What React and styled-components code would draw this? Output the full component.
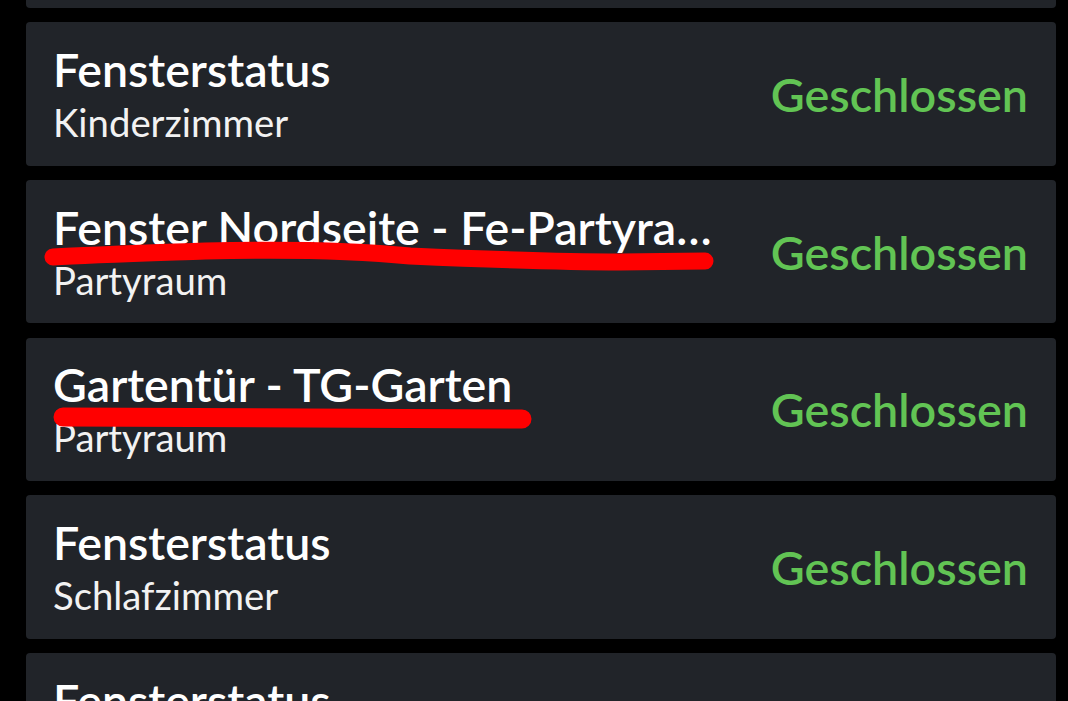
import React from 'react';
import styled, { createGlobalStyle } from 'styled-components';

const GlobalStyle = createGlobalStyle`
  html, body {
    margin: 0;
    padding: 0;
    background: #000;
    overflow: hidden;
  }
  body {
    font-family: Lato, "Liberation Sans", sans-serif;
  }
`;

const sensors = [
  { name: 'Fensterstatus', room: 'Badezimmer' },
  { name: 'Fensterstatus', room: 'Kinderzimmer' },
  { name: 'Fenster Nordseite - Fe-Partyraum', room: 'Partyraum' },
  { name: 'Gartentür - TG-Garten', room: 'Partyraum' },
  { name: 'Fensterstatus', room: 'Schlafzimmer' },
  { name: 'Fensterstatus', room: 'Wohnzimmer' },
];

const Page = styled.div`
  position: relative;
  height: 701px;
  padding: 0 12px 0 26px;
  overflow: hidden;
`;

const List = styled.div`
  display: flex;
  flex-direction: column;
  gap: 14.25px;
  margin-top: -135.75px;
`;

const Card = styled.div`
  height: 143.5px;
  flex-shrink: 0;
  box-sizing: border-box;
  background: #212429;
  border-radius: 4px;
  padding: 0 28px 0 27px;
  display: flex;
  align-items: center;
  gap: 44px;
`;

const Info = styled.div`
  flex: 1;
  min-width: 0;
  margin-bottom: 3px;
`;

const Title = styled.div`
  color: #fff;
  font-size: 46.5px;
  font-weight: 600;
  line-height: 59px;
  white-space: nowrap;
  overflow: hidden;
  text-overflow: ellipsis;
`;

const Room = styled.div`
  color: #f2f2f2;
  font-size: 38.3px;
  font-weight: 400;
  line-height: 46px;
`;

const Status = styled.div`
  color: #62c454;
  font-size: 46.7px;
  font-weight: 600;
  white-space: nowrap;
`;

const Scribble = styled.svg`
  position: absolute;
  left: 0;
  top: 0;
  pointer-events: none;
`;

const App = () => (
  <>
    <GlobalStyle />
    <Page>
      <List>
        {sensors.map((s, i) => (
          <Card key={i}>
            <Info>
              <Title>{s.name}</Title>
              <Room>{s.room}</Room>
            </Info>
            <Status>Geschlossen</Status>
          </Card>
        ))}
      </List>
      <Scribble width="1068" height="701">
        <g fill="none" stroke="#ff0000" strokeLinecap="round" strokeLinejoin="round" strokeWidth="17">
          <path d="M53 257 C 90 255, 150 253, 205 251 C 290 249, 360 251, 410 256 C 480 259, 560 262, 620 262 L 705 261" />
          <path d="M63 417 L 522 419" strokeWidth="19" />
        </g>
      </Scribble>
    </Page>
  </>
);

export default App;
